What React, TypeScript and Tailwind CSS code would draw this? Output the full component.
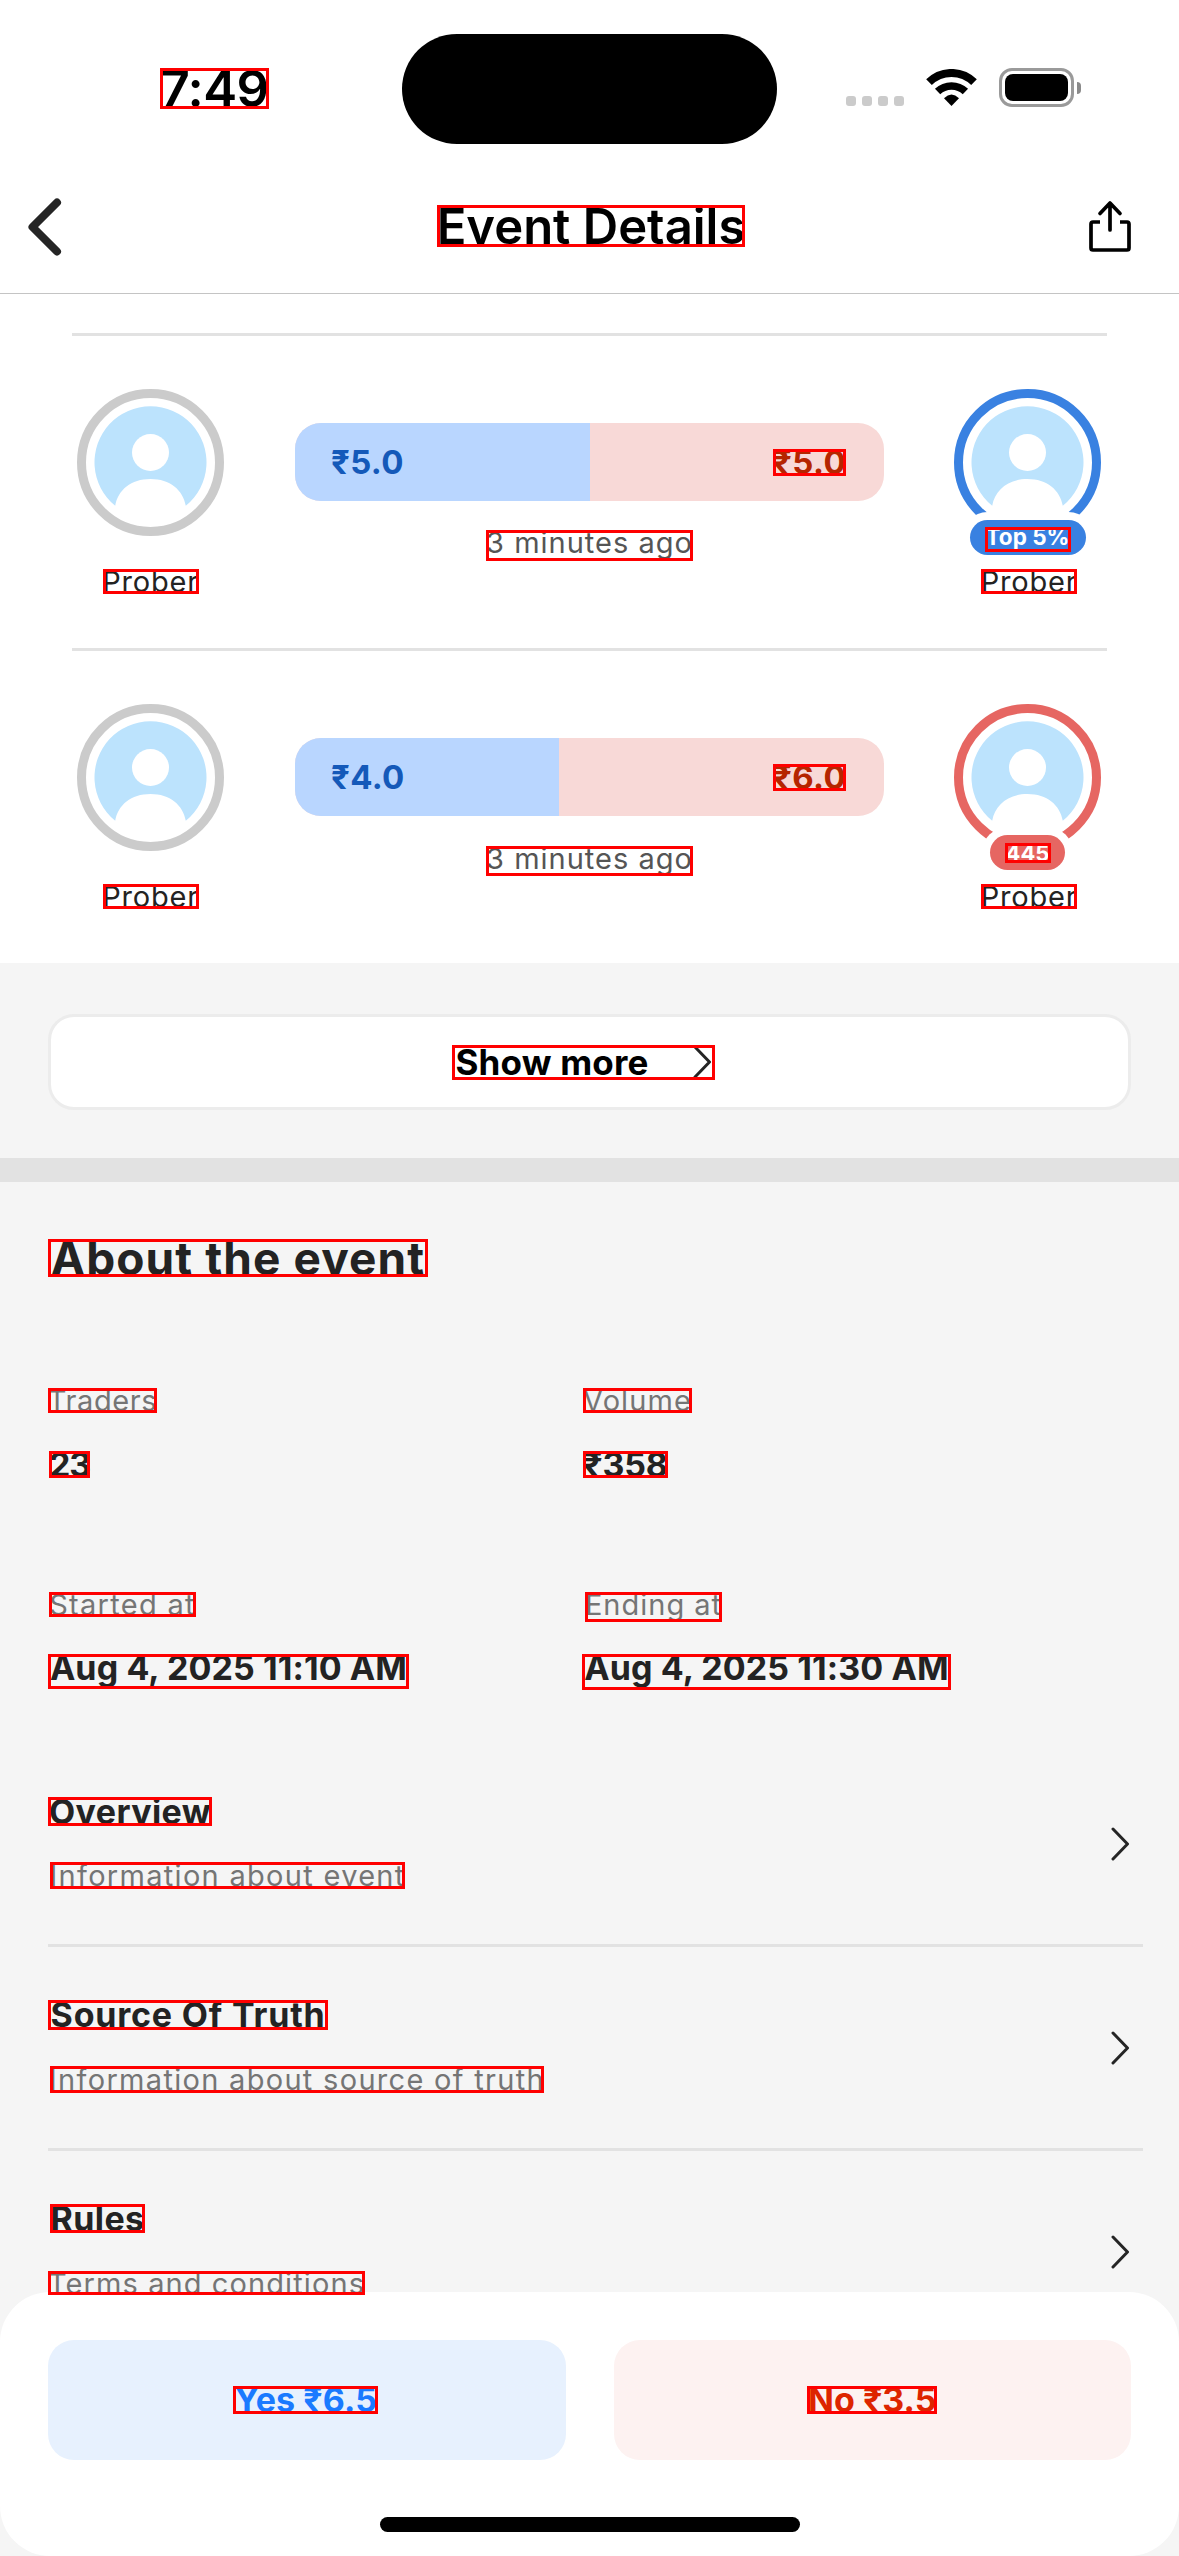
import type { ReactNode } from "react";

function Mark({ className, children }: { className: string; children: ReactNode }) {
  return (
    <div
      className={`relative flex shrink-0 items-center justify-center whitespace-nowrap leading-none after:absolute after:inset-0 after:border-[3px] after:border-[#ff0000] after:content-[''] ${className}`}
    >
      {children}
    </div>
  );
}

function StatusBar() {
  return (
    <div className="flex h-[178px] shrink-0 items-start">
      <Mark className="mt-[68px] ml-[160px] h-[41px] w-[109px] text-[51px] font-semibold tracking-[-0.6px]">
        <span>7:49</span>
      </Mark>
      <div className="mt-[34px] ml-[133px] h-[110px] w-[375px] rounded-full bg-black" />
      <div className="mt-[96px] ml-[69px] flex gap-[6px]">
        {[0, 1, 2, 3].map((i) => (
          <div key={i} className="h-[10px] w-[10px] rounded-[3px] bg-[#cbcbcb]" />
        ))}
      </div>
      <svg className="mt-[69px] ml-[22px] h-[37px] w-[51px]" viewBox="0 0 51 37" fill="none">
        <path d="M3 13.2A32 32 0 0 1 48 13.2" stroke="#000" strokeWidth="8" />
        <path d="M11.6 22.6A20 20 0 0 1 39.4 22.6" stroke="#000" strokeWidth="7.6" />
        <path d="M18 29.2Q25.500 22 33 29.200L25.500 37Z" fill="#000" />
      </svg>
      <div className="mt-[68px] ml-[22px] flex items-center gap-[3px]">
        <div className="h-[39px] w-[75px] rounded-[13px] border-[3px] border-[#9a9a9a] p-[3px]">
          <div className="h-full w-full rounded-[8px] bg-black" />
        </div>
        <div className="h-[12px] w-[4px] rounded-r-full bg-[#8a8a8a]" />
      </div>
    </div>
  );
}

function Header() {
  return (
    <div className="flex h-[116px] shrink-0 items-start border-b border-[#c4c4c4]">
      <svg className="mt-[20px] ml-[27px] h-[58px] w-[35px]" viewBox="0 0 35 58" fill="none">
        <path d="M30 4.500L5.500 29L30 53.500" stroke="#252525" strokeWidth="8" strokeLinecap="round" strokeLinejoin="round" />
      </svg>
      <Mark className="mt-[27px] ml-[375px] h-[42px] w-[308px] text-[49px] font-semibold">
        <span>Event Details</span>
      </Mark>
      <svg
        className="mt-[22px] ml-[343px] h-[53px] w-[44px]"
        viewBox="0 0 44 53"
        fill="none"
        stroke="#000"
        strokeWidth="3.700"
        strokeLinecap="round"
        strokeLinejoin="round"
      >
        <path d="M12 22H5a2 2 0 0 0-2 2v24a2 2 0 0 0 2 2h34a2 2 0 0 0 2-2V24a2 2 0 0 0-2-2h-7" strokeLinecap="butt" />
        <path d="M22 30V3M12 13.500L22 3L32 13.500" />
      </svg>
    </div>
  );
}

function Avatar({ ring, badge }: { ring: string; badge?: ReactNode }) {
  return (
    <div className="relative">
      <svg className="h-[147px] w-[147px]" viewBox="0 0 147 147">
        <circle cx="73.500" cy="73.500" r="69" fill="#fff" stroke={ring} strokeWidth="9" />
        <path
          d="M38.200 116.800A56 56 0 1 1 108.800 116.800C106 101 93 90 73.500 90S41 101 38.200 116.800Z"
          fill="#bce3fd"
        />
        <circle cx="73.500" cy="63.500" r="18.500" fill="#fff" />
      </svg>
      {badge && <div className="absolute inset-x-0 top-[131px] flex justify-center">{badge}</div>}
    </div>
  );
}

function Trader({ ring, badge }: { ring: string; badge?: ReactNode }) {
  return (
    <div className="flex w-[147px] flex-col items-center gap-[33px] pt-[53px]">
      <Avatar ring={ring} badge={badge} />
      <Mark className={`h-[25px] w-[96px] text-[29px] tracking-[0.8px] text-[#232323] ${badge ? "ml-[3px]" : ""}`}>
        <span>Prober</span>
      </Mark>
    </div>
  );
}

function TradeRow(props: {
  yes: string;
  no: string;
  split: string;
  time: string;
  ring: string;
  badge: ReactNode;
}) {
  return (
    <div className="h-[315px] shrink-0 px-[72px]">
      <div className="h-[3px] bg-[#e2e2e2]" />
      <div className="flex pl-[5px]">
        <Trader ring="#cbcbcb" />
        <div className="mr-[70px] ml-[71px] flex w-[589px] flex-col items-center pt-[87px]">
          <div className="flex h-[78px] w-full items-center overflow-hidden rounded-[26px] bg-[#f8d9d7] text-[33px] font-bold">
            <div className={`flex h-full items-center bg-[#b9d6ff] pl-[36px] tracking-[0.3px] text-[#1459b9] ${props.split}`}>
              <span className="leading-none">{props.yes}</span>
            </div>
            <Mark className="mr-[38px] ml-auto h-[27px] w-[73px] tracking-[0.4px] text-[#b52500]">
              <span>{props.no}</span>
            </Mark>
          </div>
          <Mark className={`w-[207px] text-[29px] tracking-[1px] text-[#555555] ${props.time}`}>
            <span className="-mt-[6px]">3 minutes ago</span>
          </Mark>
        </div>
        <Trader ring={props.ring} badge={props.badge} />
      </div>
    </div>
  );
}

function ChevronRight() {
  return (
    <svg className="h-[34px] w-[20px] shrink-0" viewBox="0 0 20 34" fill="none">
      <path d="M3 2L17.500 17L3 32" stroke="#252525" strokeWidth="3" strokeLinecap="round" strokeLinejoin="round" />
    </svg>
  );
}

function Stat({ label, value }: { label: ReactNode; value: ReactNode }) {
  return (
    <div className="flex flex-col items-start text-[#232323]">
      <div className="flex h-[62px] items-start text-[29px] text-[#757575]">{label}</div>
      <div className="flex items-start text-[34px] font-bold">{value}</div>
    </div>
  );
}

function InfoRow({ title, text, last }: { title: ReactNode; text: ReactNode; last?: boolean }) {
  return (
    <div
      className={`mr-[36px] ml-[48px] flex shrink-0 items-start justify-between ${
        last ? "h-[141px]" : "h-[204px] border-b-[3px] border-[#e2e2e2]"
      }`}
    >
      <div className="flex flex-col items-start pt-[54px]">
        <div className="flex h-[65px] items-start text-[34px] font-bold text-[#232323]">{title}</div>
        <div className="flex items-start text-[29px] text-[#757575]">{text}</div>
      </div>
      <div className="mt-[84px] mr-[13px]">
        <ChevronRight />
      </div>
    </div>
  );
}

export default function App() {
  return (
    <div className="flex h-[2556px] w-[1179px] flex-col overflow-hidden bg-[#f5f5f5] font-['Inter','Liberation_Sans',sans-serif] text-black">
      <div className="flex h-[963px] shrink-0 flex-col bg-white">
        <StatusBar />
        <Header />
        <div className="h-[39px] shrink-0" />
        <TradeRow
          yes="₹5.0"
          no="₹5.0"
          split="w-[295px]"
          time="mt-[29px] h-[31px]"
          ring="#3981e1"
          badge={
            <div className="flex h-[35px] w-[116px] items-center justify-center rounded-full bg-[#3981e1] ring-[8px] ring-white">
              <Mark className="mt-[3px] h-[25px] w-[86px] text-[22.500px] font-bold text-white">
                <span className="-mt-[3px]">Top 5%</span>
              </Mark>
            </div>
          }
        />
        <TradeRow
          yes="₹4.0"
          no="₹6.0"
          split="w-[264px]"
          time="mt-[30px] h-[30px]"
          ring="#e66662"
          badge={
            <div className="flex h-[35px] w-[75px] items-center justify-center rounded-full bg-[#e66662] ring-[8px] ring-white">
              <Mark className="h-[20px] w-[46px] text-[22px] font-bold text-white">
                <span>445</span>
              </Mark>
            </div>
          }
        />
      </div>

      <div className="mt-[51px] ml-[48px] flex h-[96px] w-[1083px] shrink-0 items-center justify-center rounded-[26px] border-[3px] border-[#ececec] bg-white">
        <Mark className="mr-[12px] h-[35px] w-[263px] text-[35px] font-bold tracking-[0.2px]">
          <span className="mr-[43px]">Show more</span>
          <ChevronRight />
        </Mark>
      </div>
      <div className="mt-[48px] h-[24px] shrink-0 bg-[#e2e2e2]" />

      <Mark className="mt-[57px] ml-[48px] h-[38px] w-[380px] text-[46px] font-bold tracking-[1.100px] text-[#232323]">
        <span>About the event</span>
      </Mark>

      <div className="mt-[111px] ml-[48px] grid shrink-0 grid-cols-[534px_1fr]">
        <Stat
          label={<Mark className="h-[25px] w-[109px] tracking-[0.6px]"><span>Traders</span></Mark>}
          value={<Mark className="mt-[1px] ml-[1px] h-[27px] w-[41px] tracking-[-1.200px]"><span>23</span></Mark>}
        />
        <Stat
          label={<Mark className="ml-[1px] h-[25px] w-[109px] tracking-[1.100px]"><span>Volume</span></Mark>}
          value={<Mark className="mt-[1px] ml-[1px] h-[27px] w-[85px] tracking-[-0.2px]"><span>₹358</span></Mark>}
        />
      </div>
      <div className="mt-[114px] ml-[48px] grid h-[151px] shrink-0 grid-cols-[534px_1fr]">
        <Stat
          label={<Mark className="ml-[1px] h-[25px] w-[147px] tracking-[1.300px]"><span>Started at</span></Mark>}
          value={
            <Mark className="h-[35px] w-[361px] tracking-[0.1px]">
              <span className="-mt-[7px]">Aug 4, 2025 11:10 AM</span>
            </Mark>
          }
        />
        <Stat
          label={<Mark className="ml-[3px] h-[30px] w-[137px] tracking-[1px]"><span className="-mt-[6px]">Ending at</span></Mark>}
          value={
            <Mark className="h-[36px] w-[369px] tracking-[0.1px]">
              <span className="-mt-[8px]">Aug 4, 2025 11:30 AM</span>
            </Mark>
          }
        />
      </div>

      <InfoRow
        title={<Mark className="h-[29px] w-[164px] tracking-[0.4px]"><span>Overview</span></Mark>}
        text={<Mark className="ml-[2px] h-[27px] w-[355px] tracking-[1.300px]"><span>Information about event</span></Mark>}
      />
      <InfoRow
        title={<Mark className="-mt-[1px] h-[30px] w-[280px] tracking-[0.8px]"><span>Source Of Truth</span></Mark>}
        text={
          <Mark className="ml-[2px] h-[27px] w-[494px] tracking-[1.300px]">
            <span>Information about source of truth</span>
          </Mark>
        }
      />
      <InfoRow
        last
        title={<Mark className="-mt-px ml-[2px] h-[29px] w-[95px] tracking-[0.4px]"><span>Rules</span></Mark>}
        text={
          <Mark className="z-10 mt-[1px] h-[24px] w-[317px] tracking-[1.100px]">
            <span className="mt-[1px] h-[29px] [clip-path:inset(0_0_6px_0)]">Terms and conditions</span>
          </Mark>
        }
      />

      <div className="flex h-[264px] shrink-0 flex-col items-center rounded-[50px] bg-white pt-[48px]">
        <div className="flex w-full gap-[48px] px-[48px] text-[34px] font-bold">
          <div className="flex h-[120px] flex-1 items-center justify-center rounded-[26px] bg-[#e7f1fe] text-[#1a7aff]">
            <Mark className="mr-[2px] h-[28px] w-[145px] tracking-[0.1px]"><span>Yes ₹6.5</span></Mark>
          </div>
          <div className="flex h-[120px] flex-1 items-center justify-center rounded-[26px] bg-[#fdf2f1] text-[#dd2500]">
            <Mark className="h-[28px] w-[130px]"><span>No ₹3.5</span></Mark>
          </div>
        </div>
        <div className="mt-[57px] h-[15px] w-[420px] rounded-full bg-black" />
      </div>
    </div>
  );
}
